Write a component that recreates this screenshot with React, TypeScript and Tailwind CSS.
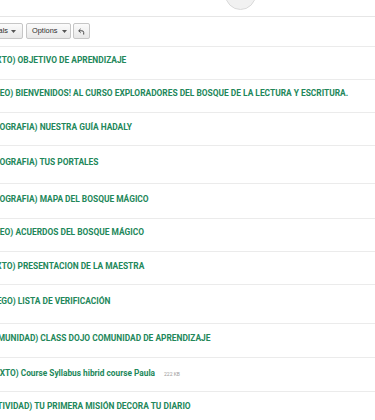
type Item = {
  title: string;
  size?: string;
  rowCls: string;
  textCls?: string;
};

const items: Item[] = [
  { title: "(TEXTO) OBJETIVO DE APRENDIZAJE", rowCls: "h-[33px] pt-[8px]" },
  { title: "(VIDEO) BIENVENIDOS! AL CURSO EXPLORADORES DEL BOSQUE DE LA LECTURA Y ESCRITURA.", rowCls: "h-[33px] pt-[8px]" },
  { title: "(INFOGRAFIA) NUESTRA GUÍA HADALY", rowCls: "h-[33px] pt-[9px]" },
  { title: "(INFOGRAFIA) TUS PORTALES", rowCls: "h-[38px] pt-[11px]" },
  { title: "(INFOGRAFIA) MAPA DEL BOSQUE MÁGICO", rowCls: "h-[35px] pt-[10px]" },
  { title: "(VIDEO) ACUERDOS DEL BOSQUE MÁGICO", rowCls: "h-[33px] pt-[8px]" },
  { title: "(TEXTO) PRESENTACION DE LA MAESTRA", rowCls: "h-[33px] pt-[9px]" },
  { title: "(JUEGO) LISTA DE VERIFICACIÓN", rowCls: "h-[39px] pt-[11px]" },
  { title: "(COMUNIDAD) CLASS DOJO COMUNIDAD DE APRENDIZAJE", rowCls: "h-[34px] pt-[9px]" },
  {
    title: "(TEXTO) Course Syllabus hibrid course Paula",
    size: "222 KB",
    rowCls: "h-[34px] pt-[10px]",
    textCls: "-ml-[13px] text-[8.3px]",
  },
  { title: "(ACTIVIDAD) TU PRIMERA MISIÓN DECORA TU DIARIO", rowCls: "h-[40px] pt-[9px]" },
];

const btn =
  "flex h-[16px] shrink-0 items-center rounded-[2px] border border-[#c6c6c6] bg-gradient-to-b from-[#fbfbfb] to-[#e8e8e8] text-[7.4px] leading-none text-[#2b2b2b]";

function Caret() {
  return (
    <svg width="5" height="3" viewBox="0 0 5 3">
      <path d="M0 0h5L2.5 3z" fill="#555" />
    </svg>
  );
}

export default function App() {
  return (
    <div
      className="h-[420px] w-[375px] overflow-hidden bg-white"
      style={{ fontFamily: "Roboto, 'Liberation Sans', sans-serif" }}
    >
      <div className="flex h-[17px] border-b border-[#e6e6e6]">
        <div className="-mt-[21px] ml-[225px] h-[31px] w-[31px] rounded-full border border-[#d9d9d9] bg-[#f1f1f1]" />
      </div>

      <div
        className="flex pt-[6px] pb-[7px]"
        style={{ fontFamily: "'Liberation Sans', Arial, sans-serif" }}
      >
        <button className={`${btn} -ml-[47px] w-[70px] justify-end gap-[3px] pr-[6px]`}>
          Add Materials
          <Caret />
        </button>
        <button className={`${btn} ml-[3px] w-[45px] gap-[5px] pl-[5px]`}>
          Options
          <Caret />
        </button>
        <button className={`${btn} ml-[2px] w-[17px] justify-center`}>
          <svg width="7" height="7" viewBox="0 0 8 8">
            <path d="M3 1 L0.8 3.2 L3 5.4" fill="none" stroke="#444" strokeWidth="1.1" />
            <path d="M1 3.2 H4.5 Q6.5 3.2 6.5 5.2 V7.5" fill="none" stroke="#444" strokeWidth="1.1" />
          </svg>
        </button>
      </div>

      <ul className="border-t border-[#ebebeb]">
        {items.map((item) => (
          <li key={item.title} className={`border-b border-[#ebebeb] ${item.rowCls}`}>
            <div
              className={`flex items-baseline whitespace-nowrap ${
                item.textCls ?? "-ml-[16.5px] text-[8.4px]"
              }`}
            >
              <span className="font-bold leading-[10px] text-[#22875a]">{item.title}</span>
              {item.size && (
                <span className="ml-[9px] text-[5px] text-[#9a9a9a]">{item.size}</span>
              )}
            </div>
          </li>
        ))}
      </ul>
    </div>
  );
}
